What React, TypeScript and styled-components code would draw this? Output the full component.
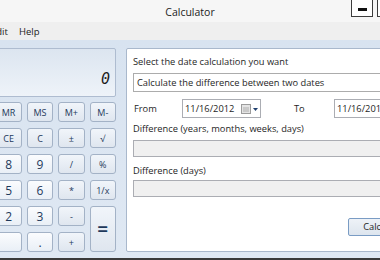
import React from 'react';
import styled, { createGlobalStyle } from 'styled-components';

const GlobalStyle = createGlobalStyle`
  html, body {
    margin: 0;
    padding: 0;
    background: #3a3a3a;
    overflow: hidden;
  }
  body {
    font-family: "Open Sans", "Noto Sans", sans-serif;
  }
`;

const Window = styled.div`
  width: 380px;
  height: 258px;
  display: flex;
  flex-direction: column;
  background: #f2f2f2;
  overflow: hidden;
`;

const TitleBar = styled.div`
  height: 22px;
  flex: none;
  display: grid;
  grid-template-columns: 1fr auto 1fr;
  background: #f6f6f6;
`;

const Title = styled.div`
  grid-column: 2;
  font-size: 10.5px;
  line-height: 24px;
  color: #1c1c1c;
`;

const Controls = styled.div`
  grid-column: 3;
  justify-self: end;
  display: flex;
  gap: 4px;
  margin-right: -19px;
`;

const ControlBox = styled.div`
  width: 20px;
  height: 16px;
  border: 1px solid #3c3c3c;
  border-top: none;
  background: #ffffff;
  display: flex;
  justify-content: center;
`;

const MinDash = styled.div`
  width: 9px;
  height: 3px;
  margin-top: 8px;
  background: #111;
`;

const MaxSquare = styled.div`
  width: 8px;
  height: 7px;
  margin-top: 4px;
  border: 1px solid #9a9a9a;
  border-top-width: 2px;
`;

const MenuBar = styled.div`
  height: 18px;
  flex: none;
  display: flex;
  gap: 11px;
  background: #efefef;
  font-size: 9.5px;
  line-height: 20px;
  color: #1a1a1a;
`;

const MenuItem = styled.span`
  &:first-child {
    margin-left: -9px;
  }
`;

const Body = styled.div`
  flex: 1;
  display: flex;
  gap: 10px;
  padding: 8px 0;
  background: linear-gradient(#d8e3f0, #dfe8f3);
`;

const LeftPanel = styled.div`
  margin-left: -36px;
  width: 152px;
  flex: none;
  display: flex;
  flex-direction: column;
  gap: 5px;
`;

const Display = styled.div`
  height: 38px;
  border: 1px solid #aebcd0;
  border-radius: 2px;
  background: linear-gradient(#dce5f0, #eef3f9);
  display: flex;
  align-items: flex-end;
  justify-content: flex-end;
  padding: 0 5px 9px 0;
`;

const Readout = styled.span`
  font-family: "DejaVu Sans Mono", monospace;
  font-style: italic;
  font-size: 15px;
  line-height: 15px;
  color: #1a1a1a;
`;

const Keypad = styled.div`
  display: grid;
  grid-template-columns: repeat(5, 1fr);
  grid-auto-rows: 20px;
  column-gap: 5px;
  row-gap: 6px;
`;

type KeyKind = 'mem' | 'digit' | 'op' | 'eq';

const Key = styled.div<{ $kind: KeyKind; $span?: number; $rows?: number }>`
  grid-column: span ${(p) => p.$span ?? 1};
  grid-row: span ${(p) => p.$rows ?? 1};
  border: 1px solid #a3b2c6;
  border-radius: 3px;
  background: ${(p) =>
    p.$kind === 'digit'
      ? 'linear-gradient(#fbfcfe, #e9eff6)'
      : 'linear-gradient(#f1f5fa, #dfe6ef)'};
  display: flex;
  align-items: center;
  justify-content: center;
  color: #1e395b;
  font-family: "Open Sans", sans-serif;
  font-size: ${(p) =>
    p.$kind === 'digit' ? '12px' : p.$kind === 'eq' ? '19px' : '9px'};
  font-weight: ${(p) => (p.$kind === 'eq' ? 600 : 400)};
`;

const RightPanel = styled.div`
  width: 306px;
  flex: none;
  background: #ffffff;
  border: 1px solid #a9b8cc;
  border-radius: 2px;
  padding: 5px 0 0 6px;
  display: flex;
  flex-direction: column;
  font-size: 9.3px;
  color: #1e1e1e;
`;

const Label = styled.div<{ $gap: number }>`
  margin-top: ${(p) => p.$gap}px;
  line-height: 16px;
`;

const Combo = styled.div`
  margin-top: 3px;
  height: 17px;
  border: 1px solid #acacac;
  background: #ffffff;
  padding-left: 3px;
  line-height: 17px;
`;

const FieldRow = styled.div`
  margin-top: 7px;
  height: 19px;
  display: flex;
  align-items: center;
`;

const FieldLabel = styled.span<{ $w: number; $indent?: number }>`
  width: ${(p) => p.$w}px;
  padding-left: ${(p) => p.$indent ?? 1}px;
  flex: none;
`;

const DateBox = styled.div`
  width: 75px;
  height: 17px;
  flex: none;
  border: 1px solid #abadb3;
  display: flex;
  align-items: center;
  padding-left: 2px;
  gap: 6px;
`;

const CalIcon = styled.svg`
  margin-left: 1px;
`;

const ResultBox = styled.div<{ $gap: number }>`
  margin-top: ${(p) => p.$gap}px;
  width: 290px;
  height: 15px;
  border: 1px solid #abadb3;
  background: #f0f0f0;
`;

const ButtonRow = styled.div`
  margin-top: 21px;
  display: flex;
  justify-content: flex-end;
  padding-right: 21px;
`;

const PushButton = styled.div`
  width: 68px;
  height: 16px;
  border: 1px solid #7a9cc4;
  border-radius: 2px;
  background: linear-gradient(#eef2f7, #dde5ee);
  line-height: 16px;
  text-align: center;
`;

const FrameBottom = styled.div`
  height: 6px;
  flex: none;
  background: #f0f0f0;
`;

const keys: { label: string; kind: KeyKind; span?: number; rows?: number }[] = [
  { label: 'MC', kind: 'mem' },
  { label: 'MR', kind: 'mem' },
  { label: 'MS', kind: 'mem' },
  { label: 'M+', kind: 'mem' },
  { label: 'M-', kind: 'mem' },
  { label: '←', kind: 'op' },
  { label: 'CE', kind: 'op' },
  { label: 'C', kind: 'op' },
  { label: '±', kind: 'op' },
  { label: '√', kind: 'op' },
  { label: '7', kind: 'digit' },
  { label: '8', kind: 'digit' },
  { label: '9', kind: 'digit' },
  { label: '/', kind: 'op' },
  { label: '%', kind: 'op' },
  { label: '4', kind: 'digit' },
  { label: '5', kind: 'digit' },
  { label: '6', kind: 'digit' },
  { label: '*', kind: 'op' },
  { label: '1/x', kind: 'op' },
  { label: '1', kind: 'digit' },
  { label: '2', kind: 'digit' },
  { label: '3', kind: 'digit' },
  { label: '-', kind: 'op' },
  { label: '=', kind: 'eq', rows: 2 },
  { label: '0', kind: 'digit', span: 2 },
  { label: '.', kind: 'digit' },
  { label: '+', kind: 'op' },
];

const CalendarGlyph = () => (
  <CalIcon width="17" height="10" viewBox="0 0 17 10">
    <rect x="0.5" y="0.5" width="9" height="9" fill="#e4e4e4" stroke="#9c9c9c" />
    <rect x="2" y="3" width="6" height="5" fill="#c9c9c9" />
    <path d="M12 4 L17 4 L14.5 7 Z" fill="#1f3f6e" />
  </CalIcon>
);

const App: React.FC = () => (
  <>
    <GlobalStyle />
    <Window>
      <TitleBar>
        <Title>Calculator</Title>
        <Controls>
          <ControlBox>
            <MinDash />
          </ControlBox>
          <ControlBox>
            <MaxSquare />
          </ControlBox>
        </Controls>
      </TitleBar>
      <MenuBar>
        <MenuItem>Edit</MenuItem>
        <MenuItem>Help</MenuItem>
      </MenuBar>
      <Body>
        <LeftPanel>
          <Display>
            <Readout>0</Readout>
          </Display>
          <Keypad>
            {keys.map((k) => (
              <Key key={k.label} $kind={k.kind} $span={k.span} $rows={k.rows}>
                {k.label}
              </Key>
            ))}
          </Keypad>
        </LeftPanel>
        <RightPanel>
          <Label $gap={0}>Select the date calculation you want</Label>
          <Combo>Calculate the difference between two dates</Combo>
          <FieldRow>
            <FieldLabel $w={48}>From</FieldLabel>
            <DateBox>
              11/16/2012
              <CalendarGlyph />
            </DateBox>
            <FieldLabel $w={40} $indent={33}>
              To
            </FieldLabel>
            <DateBox>
              11/16/2012
              <CalendarGlyph />
            </DateBox>
          </FieldRow>
          <Label $gap={3}>Difference (years, months, weeks, days)</Label>
          <ResultBox $gap={3} />
          <Label $gap={6}>Difference (days)</Label>
          <ResultBox $gap={1} />
          <ButtonRow>
            <PushButton>Calculate</PushButton>
          </ButtonRow>
        </RightPanel>
      </Body>
      <FrameBottom />
    </Window>
  </>
);

export default App;
